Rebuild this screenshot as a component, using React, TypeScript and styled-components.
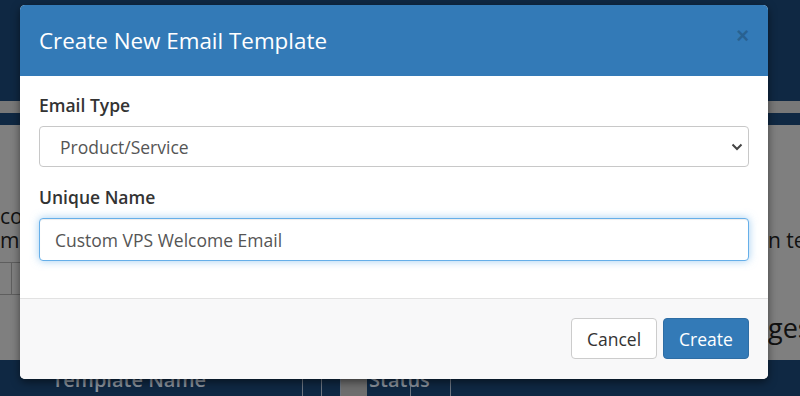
import { createGlobalStyle, styled } from "styled-components";

const GlobalStyle = createGlobalStyle`
  * {
    box-sizing: border-box;
  }
  html,
  body {
    margin: 0;
    padding: 0;
    background: #0f2843;
    font-family: "Open Sans", "Liberation Sans", sans-serif;
  }
`;

const App = () => {
  return (
    <>
      <GlobalStyle />
      <Page>
        <TopNav />
        <Strip tone="gray" />
        <Strip tone="navy" />
        <Content>
          <LeftColumn>
            <Para>co</Para>
            <Para>me</Para>
            <SideTable>
              <SideCell />
              <SideCell />
            </SideTable>
          </LeftColumn>
          <RightColumn>
            <Para>&nbsp;</Para>
            <Para>n templates</Para>
            <Heading>ges</Heading>
          </RightColumn>
        </Content>
        <TableHead>
          <HeadCell width={283}>Template Name</HeadCell>
          <HeadDivider width={19} />
          <HeadDivider width={19} />
          <SortBlock />
          <HeadCell width={44}>Status</HeadCell>
          <HeadDivider width={40} />
        </TableHead>

        <Modal>
          <ModalHeader>
            <Title>Create New Email Template</Title>
            <CloseButton aria-label="Close">×</CloseButton>
          </ModalHeader>
          <ModalBody>
            <FormGroup>
              <Label>Email Type</Label>
              <SelectWrap>
                <Select defaultValue="product">
                  <option value="general">General</option>
                  <option value="product">Product/Service</option>
                  <option value="domain">Domain</option>
                  <option value="invoice">Invoice</option>
                </Select>
                <Chevron width="12" height="8" viewBox="0 0 12 8">
                  <path
                    d="M1.5 1.5 L6 6 L10.5 1.5"
                    fill="none"
                    stroke="#444"
                    strokeWidth="2"
                  />
                </Chevron>
              </SelectWrap>
            </FormGroup>
            <FormGroup>
              <Label>Unique Name</Label>
              <Input defaultValue="Custom VPS Welcome Email" />
            </FormGroup>
          </ModalBody>
          <ModalFooter>
            <Button variant="default">Cancel</Button>
            <Button variant="primary">Create</Button>
          </ModalFooter>
        </Modal>
      </Page>
    </>
  );
};

export default App;

const Page = styled.div`
  position: relative;
  width: 800px;
  height: 396px;
  overflow: hidden;
  display: flex;
  flex-direction: column;
  background: #0f2843;
`;

const TopNav = styled.div`
  height: 101px;
  background: #0f2843;
`;

const Strip = styled.div<{ tone: "gray" | "navy" }>`
  height: 12px;
  background: ${({ tone }) => (tone === "gray" ? "#787878" : "#0f2843")};
`;

const Content = styled.div`
  height: 235px;
  background: #7f7f7f;
  display: flex;
  justify-content: space-between;
  padding-top: 79px;
  color: #111;
`;

const LeftColumn = styled.div`
  display: flex;
  flex-direction: column;
  width: 30px;
`;

const RightColumn = styled.div`
  display: flex;
  flex-direction: column;
  width: 32px;
  white-space: nowrap;
  overflow: hidden;
`;

const Para = styled.div`
  font-size: 21px;
  line-height: 24px;
  white-space: nowrap;
  overflow: hidden;
`;

const Heading = styled.div`
  margin-top: 60px;
  font-size: 27px;
  line-height: 32px;
  color: #111;
`;

const SideTable = styled.div`
  margin-top: 10px;
  display: flex;
  height: 33px;
  border-top: 1px solid #5e5e5e;
  border-bottom: 1px solid #5e5e5e;
`;

const SideCell = styled.div`
  width: 12px;
  border-right: 1px solid #5e5e5e;
`;

const TableHead = styled.div`
  flex: 1;
  display: flex;
  align-items: flex-end;
  padding-left: 20px;
  background: #0f2843;
`;

const HeadCell = styled.div<{ width: number }>`
  width: ${({ width }) => width}px;
  padding-left: ${({ width }) => (width > 100 ? 32 : 2)}px;
  height: 36px;
  font-size: 20px;
  font-weight: 600;
  line-height: 40px;
  color: #8a929c;
  border-right: 1px solid #6b7480;
  white-space: nowrap;
`;

const HeadDivider = styled.div<{ width: number }>`
  width: ${({ width }) => width}px;
  height: 36px;
  border-right: 1px solid #6b7480;
`;

const SortBlock = styled.div`
  width: 26px;
  height: 36px;
  background: #6e6e6e;
`;

const Modal = styled.div`
  position: absolute;
  left: 20px;
  top: 5px;
  width: 748px;
  display: flex;
  flex-direction: column;
  background: #fff;
  border-radius: 5px;
  overflow: hidden;
  box-shadow: 0 3px 9px rgba(0, 0, 0, 0.5);
`;

const ModalHeader = styled.div`
  height: 71px;
  display: flex;
  align-items: center;
  justify-content: space-between;
  padding: 0 19px;
  background: #337ab7;
`;

const Title = styled.h4`
  margin: 0;
  font-size: 22.4px;
  font-weight: 400;
  color: #fff;
`;

const CloseButton = styled.button`
  border: 0;
  padding: 0;
  margin-top: -10px;
  background: transparent;
  font-family: "Liberation Sans", sans-serif;
  font-size: 22px;
  line-height: 1;
  font-weight: 700;
  color: #000;
  opacity: 0.2;
  cursor: pointer;
`;

const ModalBody = styled.div`
  padding: 17px 19px 37px;
  display: flex;
  flex-direction: column;
  gap: 18px;
`;

const FormGroup = styled.div`
  display: flex;
  flex-direction: column;
  gap: 8px;
`;

const Label = styled.label`
  font-size: 17.5px;
  line-height: 25px;
  font-weight: 600;
  color: #333;
`;

const SelectWrap = styled.div`
  position: relative;
`;

const Select = styled.select`
  width: 100%;
  height: 41px;
  padding: 0 20px;
  appearance: none;
  border: 1px solid #c8c8c8;
  border-radius: 4px;
  background: #fff;
  font-family: inherit;
  font-size: 17.5px;
  color: #555;
  outline: none;
`;

const Chevron = styled.svg`
  position: absolute;
  right: 6px;
  top: 17px;
  pointer-events: none;
`;

const Input = styled.input`
  width: 100%;
  height: 43px;
  padding: 0 15px;
  border: 1px solid #66afe9;
  border-radius: 4px;
  box-shadow: inset 0 1px 1px rgba(0, 0, 0, 0.075),
    0 0 8px rgba(102, 175, 233, 0.6);
  font-family: inherit;
  font-size: 17.5px;
  color: #555;
  outline: none;
`;

const ModalFooter = styled.div`
  display: flex;
  justify-content: flex-end;
  gap: 6px;
  padding: 19px 19px 20px;
  border-top: 1px solid #e2e2e2;
  background: #f8f8f9;
`;

const Button = styled.button<{ variant: "default" | "primary" }>`
  width: 86px;
  height: 41px;
  border-radius: 4px;
  font-family: inherit;
  font-size: 17.5px;
  cursor: pointer;
  border: 1px solid
    ${({ variant }) => (variant === "primary" ? "#2e6da4" : "#ccc")};
  background: ${({ variant }) => (variant === "primary" ? "#337ab7" : "#fff")};
  color: ${({ variant }) => (variant === "primary" ? "#fff" : "#333")};
`;
